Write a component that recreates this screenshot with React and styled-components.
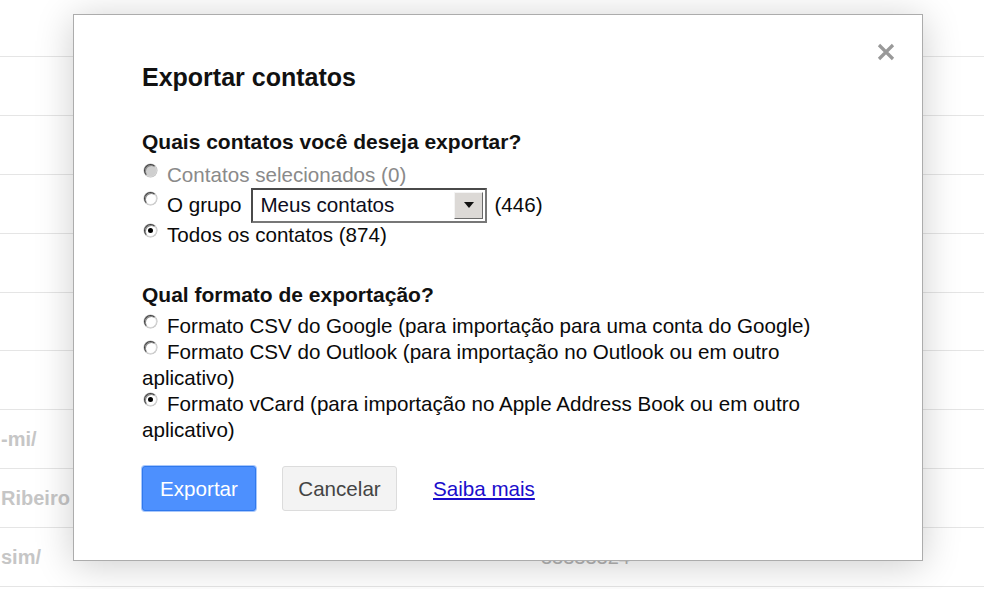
import React from 'react';
import styled, { createGlobalStyle, css } from 'styled-components';

const GlobalStyle = createGlobalStyle`
  html, body {
    margin: 0;
    padding: 0;
    background: #fff;
    font-family: "Liberation Sans", Arial, sans-serif;
  }
`;

const Page = styled.div`
  position: relative;
  width: 984px;
  height: 589px;
  overflow: hidden;
  background: #fff;
`;

const List = styled.div`
  display: flex;
  flex-direction: column;
`;

const Row = styled.div`
  position: relative;
  height: ${p => (p.$first ? '56px' : '57.9px')};
  border-bottom: 1px solid #e5e5e5;
  display: flex;
  align-items: center;
  font-size: 20px;
  font-weight: bold;
  color: #c6c6c6;
`;

const Name = styled.span`
  width: 540px;
  flex: none;
  padding-left: 1px;
`;

const Phone = styled.span`
  font-weight: normal;
  font-size: 20px;
  color: #b5b5b5;
`;

const Dialog = styled.div`
  position: absolute;
  left: 73px;
  top: 14px;
  width: 711px;
  height: 498px;
  padding: 47px 69px 0 68px;
  background: #fff;
  border: 1px solid #acacac;
  box-shadow: 0 4px 36px rgba(0, 0, 0, 0.2);
  color: #111;
`;

const Close = styled.button`
  position: absolute;
  top: 27px;
  right: 26px;
  width: 20px;
  height: 20px;
  padding: 0;
  border: 0;
  background: none;
  cursor: pointer;
  display: flex;
`;

const Title = styled.h2`
  margin: 0;
  font-size: 25px;
  line-height: 30px;
  font-weight: bold;
  color: #111;
`;

const Section = styled.div`
  margin-top: ${p => p.$gap}px;
`;

const Heading = styled.div`
  font-size: 21px;
  line-height: 26px;
  font-weight: bold;
  margin-bottom: ${p => p.$after}px;
`;

const Option = styled.label`
  display: block;
  font-size: 20.6px;
  line-height: 26px;
  color: ${p => (p.$disabled ? '#8a8a8a' : '#0a0a0a')};
  ${p => p.$tall && css`
    display: flex;
    align-items: center;
    height: 34px;
  `}
`;

const Radio = styled.span`
  display: inline-block;
  box-sizing: border-box;
  width: 13px;
  height: 13px;
  margin: 0 10px 0 2px;
  vertical-align: 5px;
  border-radius: 50%;
  border: 1px solid;
  border-color: #3c3c3c #d6d6d6 #d6d6d6 #3c3c3c;
  background: ${p => (p.$disabled ? '#cfcfcf' : '#fff')};
  box-shadow: inset 1px 1px 0 #8a8a8a, 0 0 0 0.5px #bdbdbd;
  position: relative;
  flex: none;
  ${p => p.$tall && css`
    align-self: flex-start;
    margin-top: 4px;
  `}
  ${p => p.$checked && css`
    &::after {
      content: '';
      position: absolute;
      left: 3px;
      top: 3px;
      width: 5px;
      height: 5px;
      border-radius: 50%;
      background: #000;
    }
  `}
`;

const Select = styled.div`
  box-sizing: border-box;
  display: flex;
  align-items: center;
  justify-content: space-between;
  width: 236px;
  height: 35px;
  margin: 0 7px 0 10px;
  padding: 0 2px 0 7px;
  border: 2px solid;
  border-color: #4a4a4a #777 #777 #4a4a4a;
  background: #fff;
  color: #0d0d20;
`;

const DropButton = styled.span`
  box-sizing: border-box;
  width: 29px;
  height: 27px;
  display: flex;
  align-items: center;
  justify-content: center;
  background: #dcd9d6;
  border: 1px solid;
  border-color: #f4f4f4 #6a6a6a #6a6a6a #f4f4f4;
`;

const Actions = styled.div`
  display: flex;
  align-items: center;
  margin-top: 23px;
`;

const Button = styled.button`
  box-sizing: border-box;
  height: 45px;
  padding: 0;
  width: ${p => p.$w}px;
  font-family: inherit;
  font-size: 20.6px;
  border-radius: 3px;
  cursor: pointer;
  margin-right: 26px;
  ${p => (p.$primary
    ? css`
      color: #fff;
      background: #4d90fe;
      border: 1px solid #3079ed;
      box-shadow: 0 0 0 1px #a9c8fb;
    `
    : css`
      color: #444;
      background: #f3f3f3;
      border: 1px solid #dcdcdc;
    `)}
`;

const Link = styled.a`
  margin-left: 10px;
  font-size: 20.6px;
  color: #1a0dcc;
  text-decoration: underline;
`;

const App = () => (
  <Page>
    <GlobalStyle />
    <List>
      <Row $first />
      <Row />
      <Row />
      <Row />
      <Row />
      <Row />
      <Row />
      <Row><Name>-mi/</Name></Row>
      <Row><Name>Ribeiro</Name></Row>
      <Row><Name>sim/</Name><Phone>33333324</Phone></Row>
    </List>

    <Dialog role="dialog">
      <Close aria-label="Fechar">
        <svg width="20" height="20" viewBox="0 0 20 20">
          <path d="M3 3 L17 17 M17 3 L3 17" stroke="#999" strokeWidth="3.2" />
        </svg>
      </Close>
      <Title>Exportar contatos</Title>

      <Section $gap={37}>
        <Heading $after={7}>Quais contatos você deseja exportar?</Heading>
        <Option $disabled><Radio $disabled />Contatos selecionados (0)</Option>
        <Option $tall>
          <Radio $tall />O grupo
          <Select>
            Meus contatos
            <DropButton>
              <svg width="10" height="6" viewBox="0 0 10 6">
                <path d="M0 0 H10 L5 6 Z" fill="#111" />
              </svg>
            </DropButton>
          </Select>
          (446)
        </Option>
        <Option><Radio $checked />Todos os contatos (874)</Option>
      </Section>

      <Section $gap={34}>
        <Heading $after={5}>Qual formato de exportação?</Heading>
        <Option><Radio />Formato CSV do Google (para importação para uma conta do Google)</Option>
        <Option><Radio />Formato CSV do Outlook (para importação no Outlook ou em outro aplicativo)</Option>
        <Option><Radio $checked />Formato vCard (para importação no Apple Address Book ou em outro aplicativo)</Option>
      </Section>

      <Actions>
        <Button $primary $w={114}>Exportar</Button>
        <Button $w={115}>Cancelar</Button>
        <Link href="#">Saiba mais</Link>
      </Actions>
    </Dialog>
  </Page>
);

export default App;
